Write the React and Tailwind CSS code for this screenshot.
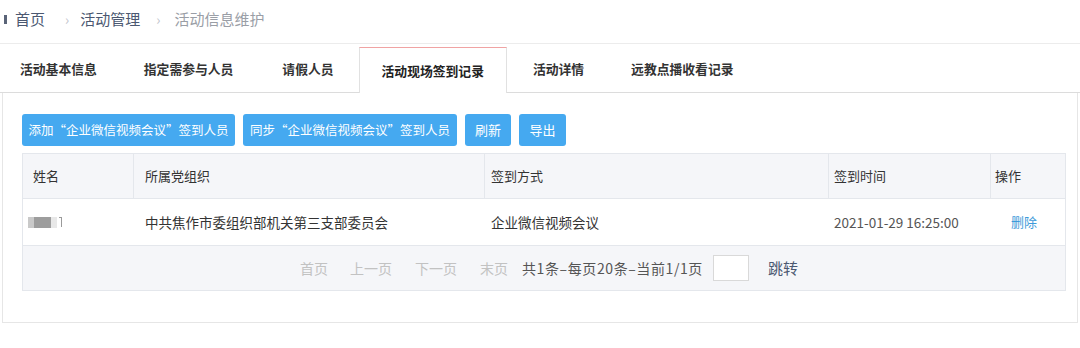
import React from "react";

const tabs = ["活动基本信息", "指定需参与人员", "请假人员", "活动现场签到记录", "活动详情", "远教点播收看记录"];
const gaps = ["mr-[47px]", "mr-[49px]", "mr-[25px]", "mr-[26px]", "mr-[47px]", ""];

export default function App() {
  const active = 3;
  return (
    <div
      className="w-[1080px] h-[348px] bg-white overflow-hidden text-[#333]"
      style={{ fontFamily: '"Noto Sans CJK SC", "Noto Sans", sans-serif' }}
    >
      {/* Breadcrumb */}
      <div className="h-[43px] flex items-center text-[15px] pl-[4px] pb-[4px]">
        <span className="w-[3px] h-[9px] bg-[#5a6478] mr-[8px]" />
        <span className="text-[#4b5871]">首页</span>
        <span className="text-[#c0c4cc] ml-[20px] mr-[11px] text-[14px]">›</span>
        <span className="text-[#4b5871]">活动管理</span>
        <span className="text-[#c0c4cc] ml-[16px] mr-[14px] text-[14px]">›</span>
        <span className="text-[#9a9ea6]">活动信息维护</span>
      </div>

      {/* Tabs */}
      <div className="border-t border-[#ececec] border-b border-b-[#dcdcdc] h-[50px] flex items-end pl-[20px]">
        {tabs.map((t, i) =>
          i === active ? (
            <div
              key={t}
              className={`h-[46px] -mb-px px-[22px] bg-white border-x border-t border-x-[#e1e1e1] border-t-[#f0a3a3] flex items-center text-[12.8px] font-semibold text-[#222] ${gaps[i]}`}
            >
              {t}
            </div>
          ) : (
            <div
              key={t}
              className={`h-[46px] flex items-center text-[12.8px] font-semibold text-[#333] ${gaps[i]}`}
            >
              {t}
            </div>
          )
        )}
      </div>

      {/* Panel */}
      <div className="mx-[2px] border-l border-r border-b border-[#e6e6e6] h-[230px] pt-[21px] pl-[19px] pr-[11px]">
        <div className="flex gap-[8px] text-[12.5px] text-white">
          <button className="h-[32px] w-[213px] rounded-[3px] bg-[#45a9f0]">添加“企业微信视频会议”签到人员</button>
          <button className="h-[32px] w-[214px] rounded-[3px] bg-[#45a9f0]">同步“企业微信视频会议”签到人员</button>
          <button className="h-[32px] w-[46px] rounded-[3px] bg-[#45a9f0] text-[13px]">刷新</button>
          <button className="h-[32px] w-[47px] rounded-[3px] bg-[#45a9f0] text-[13px]">导出</button>
        </div>

        <div className="mt-[7px] border border-[#e4e7ec] text-[13px]">
          <div className="flex h-[45px] bg-[#f5f6f9] border-b border-[#e4e7ec] items-center">
            <div className="w-[111px] h-full flex items-center pl-[10px] border-r border-[#e4e7ec]">姓名</div>
            <div className="w-[351px] h-full flex items-center pl-[11px] border-r border-[#e4e7ec]">所属党组织</div>
            <div className="w-[344px] h-full flex items-center pl-[6px] border-r border-[#e4e7ec]">签到方式</div>
            <div className="w-[162px] h-full flex items-center pl-[5px] border-r border-[#e4e7ec]">签到时间</div>
            <div className="flex-1 h-full flex items-center pl-[4px]">操作</div>
          </div>
          <div className="flex h-[47px] items-center bg-white border-b border-[#e4e7ec]">
            <div className="w-[111px] pl-[5px] flex items-center">
              <span className="w-[6px] h-[11px] bg-[#c9c9c9]" />
              <span className="w-[17px] h-[11px] bg-[#9d9d9d]" />
              <span className="w-[6px] h-[11px] bg-[#e8e8e8]" />
              <span className="ml-[2px] w-[3px] h-[10px] border-r border-t border-[#9a9a9a]" />
            </div>
            <div className="w-[351px] pl-[11px] text-[13.5px]">中共焦作市委组织部机关第三支部委员会</div>
            <div className="w-[344px] pl-[6px] text-[13.5px]">企业微信视频会议</div>
            <div className="w-[162px] pl-[5px] text-[#555] text-[13.5px]">2021-01-29 16:25:00</div>
            <div className="flex-1 pl-[20px] text-[#3d9ad9]">删除</div>
          </div>
          <div className="h-[44px] bg-[#f5f6f9] flex items-center justify-center text-[14px] pl-[10px]">
            <span className="text-[#c2c2c2]">首页</span>
            <span className="text-[#c2c2c2] ml-[22px]">上一页</span>
            <span className="text-[#c2c2c2] ml-[23px]">下一页</span>
            <span className="text-[#c2c2c2] ml-[23px]">末页</span>
            <span className="text-[#555] ml-[14px] tracking-[0.6px]">共1条–每页20条–当前1/1页</span>
            <span className="ml-[10px] w-[36px] h-[26px] bg-white border border-[#d9d9d9]" />
            <span className="ml-[19px] text-[#4b5871] text-[15px]">跳转</span>
          </div>
        </div>
      </div>
    </div>
  );
}
